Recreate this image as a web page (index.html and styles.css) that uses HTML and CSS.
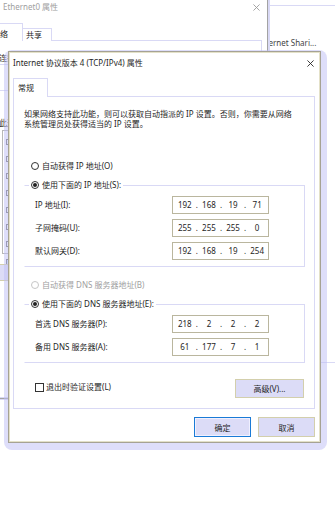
FILE: index.html
```html
<!DOCTYPE html>
<html lang="zh-CN">
<head>
  <meta charset="UTF-8" />
  <title>Internet 协议版本 4 (TCP/IPv4) 属性</title>
  <link rel="stylesheet" href="styles.css">
</head>
<body>
  <div class="desktop">

    <!-- fenêtre du fond à droite -->
    <div class="window window-sharing">
      <p class="sharing-text">Internet Shari...</p>
    </div>

    <!-- Ethernet0 -->
    <div class="window window-ethernet">
      <div class="titlebar titlebar-back">
        <span class="title">Ethernet0 属性</span>
        <svg class="close" viewBox="0 0 8 8"><path d="M0.5 0.5L7.5 7.5M7.5 0.5L0.5 7.5"/></svg>
      </div>
      <div class="tabs tabs-back">
        <div class="tab tab-active">网络</div>
        <div class="tab">共享</div>
      </div>
      <div class="panel panel-back">
        <p>连接时使用:</p>
        <div class="adapter-box"></div>
        <p class="list-title">此连接使用下列项目(O):</p>
        <ul class="item-list">
          <li><span class="box"></span></li>
          <li><span class="box"></span></li>
          <li><span class="box"></span></li>
          <li><span class="box"></span></li>
          <li><span class="box"></span></li>
          <li><span class="box"></span></li>
          <li><span class="box"></span></li>
          <li class="selected"><span class="box"></span></li>
        </ul>
        <button class="btn btn-back">安装(N)...</button>
      </div>
    </div>

    <!-- TCP/IPv4 -->
    <div class="dialog-wrap">
      <div class="dialog">
        <div class="titlebar">
          <span class="title">Internet 协议版本 4 (TCP/IPv4) 属性</span>
          <svg class="close" viewBox="0 0 8 8"><path d="M0.5 0.5L7.5 7.5M7.5 0.5L0.5 7.5"/></svg>
        </div>

        <div class="tabs">
          <div class="tab tab-active">常规</div>
        </div>

        <div class="panel">
          <p class="intro">如果网络支持此功能，则可以获取自动指派的 IP 设置。否则，你需要从网络<br>系统管理员处获得适当的 IP 设置。</p>

          <label class="radio radio-first"><span class="dot"></span>自动获得 IP 地址(O)</label>

          <div class="group">
            <label class="radio legend"><span class="dot checked"></span>使用下面的 IP 地址(S):</label>
            <div class="field-row">
              <span class="field-label">IP 地址(I):</span>
              <div class="ip-box"><span>192</span><i>.</i><span>168</span><i>.</i><span>19</span><i>.</i><span>71</span></div>
            </div>
            <div class="field-row">
              <span class="field-label">子网掩码(U):</span>
              <div class="ip-box"><span>255</span><i>.</i><span>255</span><i>.</i><span>255</span><i>.</i><span>0</span></div>
            </div>
            <div class="field-row">
              <span class="field-label">默认网关(D):</span>
              <div class="ip-box"><span>192</span><i>.</i><span>168</span><i>.</i><span>19</span><i>.</i><span>254</span></div>
            </div>
          </div>

          <label class="radio radio-disabled"><span class="dot"></span>自动获得 DNS 服务器地址(B)</label>

          <div class="group group-dns">
            <label class="radio legend"><span class="dot checked"></span>使用下面的 DNS 服务器地址(E):</label>
            <div class="field-row">
              <span class="field-label">首选 DNS 服务器(P):</span>
              <div class="ip-box"><span>218</span><i>.</i><span>2</span><i>.</i><span>2</span><i>.</i><span>2</span></div>
            </div>
            <div class="field-row">
              <span class="field-label">备用 DNS 服务器(A):</span>
              <div class="ip-box"><span>61</span><i>.</i><span>177</span><i>.</i><span>7</span><i>.</i><span>1</span></div>
            </div>
          </div>

          <div class="bottom-row">
            <label class="check"><span class="box"></span>退出时验证设置(L)</label>
            <button class="btn btn-advanced">高级(V)...</button>
          </div>
        </div>

        <div class="actions">
          <button class="btn btn-default">确定</button>
          <button class="btn">取消</button>
        </div>
      </div>
    </div>

  </div>
</body>
</html>
```

FILE: styles.css
```css
:root {
  --text: #1e1e1e;
  --grey-text: #a0a0a0;
  --lavender: #d9d9f5;
  --lavender-fill: #dcdcf7;
  --shadow: #dfdffb;
  --khaki: #d3cfac;
  --frame: #a5a294;
  --field: #bab69e;
  --blue: #1a7ad6;
}

* {
  margin: 0;
  padding: 0;
  box-sizing: border-box;
}

body {
  font-family: "Noto Sans", "Noto Sans CJK SC", sans-serif;
  font-size: 8px;
  line-height: 10px;
  color: var(--text);
  background-color: #fff;
}

.desktop {
  position: relative;
  width: 335px;
  height: 514px;
  overflow: hidden;
}

.window {
  position: absolute;
  background-color: #fff;
}

/* fenêtres en arrière-plan */
.window-sharing {
  left: 200px;
  top: 5px;
  width: 160px;
  height: 358px;
  border-top: 1px solid var(--lavender);
  border-bottom: 1px solid var(--lavender);
  z-index: 1;
}

.sharing-text {
  padding: 32px 0 0 58px;
  white-space: nowrap;
  color: #444;
}

.window-ethernet {
  left: -16px;
  top: -4px;
  width: 284px;
  height: 403px;
  border-right: 1px solid #a3a3a3;
  border-bottom: 1px solid #a3a3a3;
  box-shadow: 2px 1px 0 var(--lavender);
  z-index: 2;
}

.titlebar {
  display: flex;
  align-items: center;
  justify-content: space-between;
  height: 22px;
  padding: 0 6px 0 4px;
}

.titlebar-back {
  padding: 0 7px 0 19px;
  color: var(--grey-text);
}

.close {
  width: 7px;
  height: 7px;
  fill: none;
  stroke: #222;
  stroke-width: 1;
}

.titlebar-back .close {
  stroke: #999;
}

.tabs {
  display: flex;
  align-items: flex-end;
  margin: 4px 0 -1px 4px;
  position: relative;
  z-index: 1;
}

.tab {
  height: 19px;
  width: 35px;
  padding: 4px 0 0 4px;
  border: 1px solid var(--lavender);
  border-bottom: none;
  background-color: #fff;
}

.tabs-back {
  margin: 5px 0 -1px 0;
}

.tabs-back .tab {
  height: 13px;
  width: 29px;
  padding: 1px 0 0 3px;
  border-left: none;
}

.tabs-back .tab-active {
  height: 18px;
  width: 39px;
  padding: 5px 0 0 7px;
  border-left: 1px solid var(--lavender);
}

.panel {
  height: 313px;
  margin: 0 5px 0 4px;
  padding: 12px 9px 0 10px;
  border: 1px solid var(--lavender);
}

.panel-back {
  height: 358px;
  margin: 0 5px 0 2px;
  padding: 12px 0 0 12px;
}

.adapter-box {
  width: 240px;
  height: 27px;
  margin: 1px 0 0 -4px;
  border: 1px solid var(--lavender);
}

.list-title {
  margin-top: 27px;
}

.item-list {
  list-style: none;
  width: 240px;
  height: 124px;
  margin: 2px 0 0 3px;
  padding: 6px 0 0 3px;
  border: 1px solid #b8b8b8;
}

.item-list li {
  height: 15px;
}

.item-list .box {
  display: block;
  width: 6px;
  height: 6px;
  margin-top: 2px;
  border: 1px solid #777;
}

.item-list .selected {
  margin-top: 3px;
  background-color: #cce0f7;
}

.btn-back {
  display: block;
  width: 60px;
  height: 17px;
  margin: 10px 0 0 -4px;
}

/* boîte de dialogue TCP/IPv4 */
.dialog-wrap {
  position: absolute;
  left: 4px;
  top: 50px;
  padding: 1px 6px 7px 4px;
  border-radius: 8px;
  background-color: rgba(190, 190, 245, 0.5);
  z-index: 3;
}

.dialog {
  display: flex;
  flex-direction: column;
  width: 313px;
  height: 392px;
  background-color: #fff;
  border: 1px solid var(--frame);
  box-shadow: inset 0 0 0 1px #e4e1c8;
}

.intro {
  line-height: 10px;
  margin-left: 0;
}

.radio {
  display: flex;
  align-items: center;
  gap: 3px;
  height: 12px;
  margin-left: 7px;
  white-space: nowrap;
}

.radio-first {
  margin-top: 31px;
}

.dot {
  position: relative;
  width: 8px;
  height: 8px;
  border: 1px solid #333;
  border-radius: 50%;
  background-color: #fff;
}

.dot.checked::after {
  content: "";
  position: absolute;
  left: 1px;
  top: 1px;
  width: 4px;
  height: 4px;
  border-radius: 50%;
  background-color: #222;
}

.radio-disabled {
  margin-top: 12px;
  color: var(--grey-text);
}

.radio-disabled .dot {
  border-color: #c6c6c6;
}

.group {
  width: 281px;
  margin-top: 13px;
  padding-bottom: 6px;
  border: 1px solid var(--lavender);
  border-left-color: transparent;
}

.legend {
  width: fit-content;
  margin: -7px 0 0 4px;
  padding: 0 2px;
  background-color: #fff;
}

.field-row {
  display: flex;
  align-items: center;
  height: 18px;
  margin-top: 5px;
  padding-left: 10px;
}

.field-label {
  width: 137px;
}

.ip-box {
  display: flex;
  align-items: center;
  width: 97px;
  height: 18px;
  padding-left: 1px;
  border: 1px solid var(--field);
}

.ip-box span {
  width: 22px;
  text-align: center;
}

.ip-box i {
  width: 2.5px;
  font-style: normal;
  text-align: center;
}

.bottom-row {
  display: flex;
  justify-content: space-between;
  align-items: flex-start;
  height: 19px;
  margin-top: 16px;
  padding-left: 11px;
}

.check {
  display: flex;
  align-items: center;
  gap: 2px;
  margin-top: 3px;
}

.check .box {
  width: 9px;
  height: 9px;
  border: 1px solid #333;
}

.btn {
  font-family: inherit;
  font-size: 8px;
  color: var(--text);
  background-color: var(--lavender-fill);
  border: 1px solid var(--khaki);
}

.btn-advanced {
  width: 69px;
  height: 19px;
  margin-right: 1px;
}

.actions {
  display: flex;
  justify-content: flex-end;
  gap: 7px;
  margin-top: 8px;
  padding-right: 5px;
}

.actions .btn {
  width: 57px;
  height: 20px;
}

.btn-default {
  border: 1px solid var(--blue);
  box-shadow: inset 0 0 0 1px #f0f0ff;
}
```
